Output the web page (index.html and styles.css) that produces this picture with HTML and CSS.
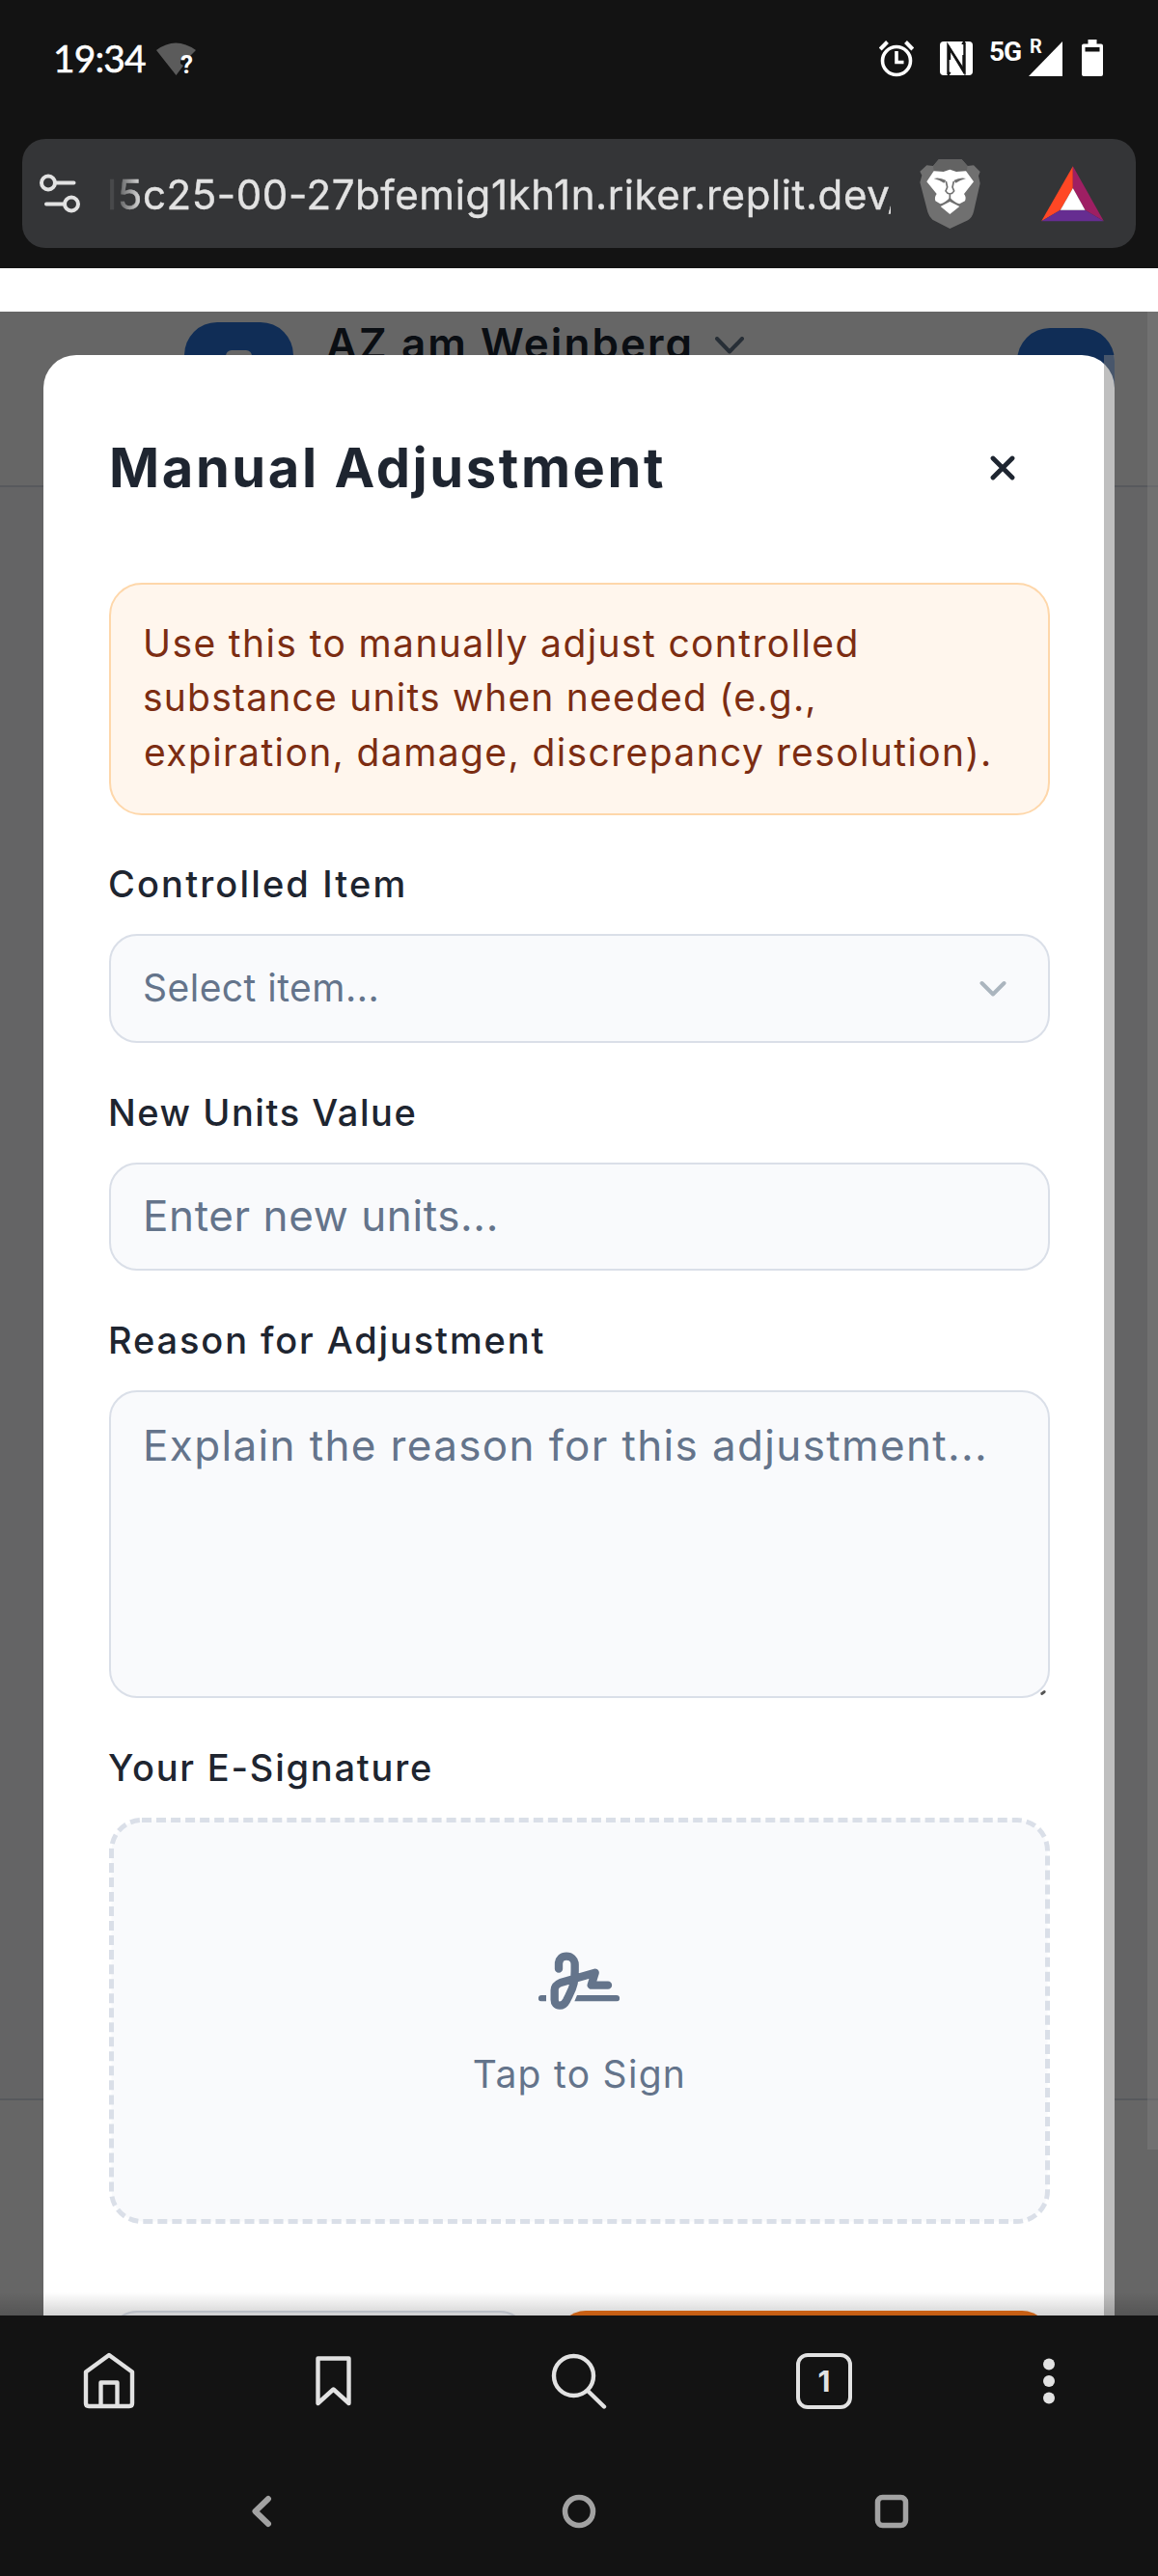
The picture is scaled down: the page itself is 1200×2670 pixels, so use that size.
FILE: index.html
```html
<!DOCTYPE html>
<html lang="en">
<head>
<meta charset="utf-8">
<title>Manual Adjustment</title>
<link rel="stylesheet" href="styles.css">
</head>
<body>
<div class="phone">
  <header class="status">
    <span class="clock">19:34</span>
    <span class="wifi">
      <svg width="42" height="34" viewBox="0 0 42 34"><path d="M0 8Q20-7 41 8L35 14Q24 12 25 22L28 24L20.500 34Z" fill="#5b5b5b"/></svg>
      <b class="wifi-mark">?</b>
    </span>
    <span class="spacer"></span>
    <svg class="alarm" width="36" height="38" viewBox="0 0 36 38" fill="none" stroke="#fff"><circle cx="18" cy="21" r="14.500" stroke-width="3.600"/><path d="M18 11v11.500h7.500" stroke-width="3.600"/><path d="M1.200 9L8.500 1.500M34.800 9L27.500 1.500" stroke-width="4"/></svg>
    <svg class="nfc" width="34" height="35" viewBox="0 0 34 35"><rect width="34" height="35" rx="4" fill="#fff"/><path d="M8.500 34V4.500L24.500 31V14" fill="none" stroke="#131313" stroke-width="2.400"/><path d="M25.500 1V31L10 7V19" fill="none" stroke="#131313" stroke-width="2.400"/><path d="M9 35q-.5-3 2-2M25 0q0 3-2 1.500" fill="none" stroke="#131313" stroke-width="2.400"/></svg>
    <b class="net">5G</b>
    <span class="signal">
      <svg width="35" height="36" viewBox="0 0 35 36"><path d="M35 0V36H0Z" fill="#fff"/></svg>
      <b class="roam">R</b>
    </span>
    <svg width="22" height="38" viewBox="0 0 22 38"><path d="M6.500 0h9v4.500H20a2 2 0 0 1 2 2V36a2 2 0 0 1-2 2H2a2 2 0 0 1-2-2V6.500a2 2 0 0 1 2-2h4.500Z" fill="#fff"/><path d="M3.500 8h15v4.500h-15z" fill="#131313"/></svg>
  </header>

  <div class="urlbar">
    <svg class="tune" width="43" height="41" viewBox="0 0 43 41" fill="none" stroke="#e2e2e2" stroke-width="4" stroke-linecap="round"><circle cx="9" cy="9.500" r="7"/><path d="M17 9.500H35.500M7 31.500H25"/><circle cx="33" cy="31.500" r="7"/></svg>
    <div class="url"><span>l5c25-00-27bfemig1kh1n.riker.replit.dev/</span></div>
    <svg class="shield" width="64" height="72" viewBox="38 28 192 216">
      <path d="M97 29h72l18 20 19-2 20 20-5 13 5 23-20 88q-4 18-18 27l-56 26-54-28q-10-8-15-24L39 100l6-22-6-12 21-19 20 2Z" fill="#707070"/>
      <path d="M97 29h72l18 20-3 16-36 1-16-7-16 7-34-1-2-16Z" fill="#636363"/>
      <path d="M82 65l30 2 20-7 20 7 30-2 24 33-30 38q8 10 3 22l-17 9q-15-4-30-20-14 16-30 20l-15-9q-4-12 4-22L60 98Z" fill="#fff"/>
      <path d="M132 160l30 15-30 24-29-24Z" fill="#fff"/>
      <path d="M82 88q18-5 38 6l-6 8q-14-9-32-14ZM182 88q-18-5-38 6l6 8q14-9 32-14Z" fill="#707070"/>
      <path d="M120 97l4 18-5 12q4 8 13 9 9-1 13-9l-5-12 4-18M132 136v15" fill="none" stroke="#707070" stroke-width="5"/>
    </svg>
    <svg class="bat" width="65" height="58" viewBox="417 48 194 174"><path d="M515 49V117L476 185 417 220Z" fill="#ff4724"/><path d="M515 49L611 220 553 185 515 117Z" fill="#9e1f63"/><path d="M417 220L476 185H553L611 220Z" fill="#662d91"/><path d="M515 117L553 185H476Z" fill="#fff"/></svg>
  </div>

  <main class="viewport">
    <div class="app">
      <div class="app-head">
        <span class="logo"><i></i></span>
        <span class="site">AZ am Weinberg</span>
        <svg class="site-chev" width="30" height="18" viewBox="0 0 30 18" fill="none" stroke="#617387" stroke-width="4" stroke-linecap="round" stroke-linejoin="round"><path d="M2 2L15 15.500 28 2"/></svg>
        <span class="avatar"></span>
      </div>
      <div class="app-body"></div>
      <div class="app-foot"></div>
    </div>

    <div class="backdrop"></div>
    <div class="page-scroll"></div>

    <section class="modal">
      <div class="modal-head">
        <h1>Manual Adjustment</h1>
        <svg class="close" width="26" height="26" viewBox="0 0 26 26" fill="none" stroke="#1e2530" stroke-width="4.800" stroke-linecap="round"><path d="M3 3L23 23M23 3L3 23"/></svg>
      </div>
      <p class="alert"><span class="l1">Use this to manually adjust controlled</span><br><span class="l2">substance units when needed (e.g.,</span><br><span class="l3">expiration, damage, discrepancy resolution).</span></p>
      <div class="field">
        <label class="lb-item">Controlled Item</label>
        <div class="control select"><span>Select item...</span>
          <svg width="28" height="18" viewBox="0 0 28 18" fill="none" stroke="#abb5be" stroke-width="4" stroke-linecap="round" stroke-linejoin="round"><path d="M2.500 3L14 14.500 25.500 3"/></svg>
        </div>
      </div>
      <div class="field">
        <label class="lb-units">New Units Value</label>
        <div class="control units"><span>Enter new units...</span></div>
      </div>
      <div class="field">
        <label class="lb-reason">Reason for Adjustment</label>
        <div class="control area"><span>Explain the reason for this adjustment...</span><i class="grip"></i></div>
      </div>
      <div class="field">
        <label class="lb-sign">Your E-Signature</label>
        <div class="sign">
          <svg class="sign-frame" width="975" height="421" viewBox="0 0 975 421"><rect x="2.500" y="2.500" width="970" height="416" rx="31.500" fill="#f9fafc" stroke="#dadfe8" stroke-width="5" stroke-dasharray="10 5.030"/></svg>
          <svg class="sign-icon" width="84" height="60" viewBox="324 130 252 180" fill="none" stroke="#64748b" stroke-linecap="round" stroke-linejoin="round"><path d="M387 183V167C387 153 397 144 411 144S437 154 437 169V190C437 220 434 238 419 266L411 282C405 293 398 297 390 297C380 297 374 290 374 279V249C374 236 381 231 393 226L500 195L488 234H540" stroke-width="25"/><path d="M348 265H333a9.500 9.500 0 0 0 0 19H348ZM444 265H567a9.500 9.500 0 0 1 0 19H436Z" fill="#64748b" stroke="none"/></svg>
          <span>Tap to Sign</span>
        </div>
      </div>
      <div class="actions"><div class="btn ghost"></div><div class="btn primary"></div></div>
      <div class="modal-scroll"></div>
    </section>
    <div class="shade"></div>
  </main>

  <nav class="tools">
    <svg width="54" height="60" viewBox="0 0 54 60" fill="none" stroke="#e2e2e2" stroke-width="4.400" stroke-linejoin="round"><path d="M3 20.500L27 3 51 20.500V53q0 3-3 3H6q-3 0-3-3ZM18.500 56V31.500H35.500V56"/></svg>
    <svg width="37" height="52" viewBox="0 0 37 52" fill="none" stroke="#e2e2e2" stroke-width="4.400" stroke-linejoin="round"><path d="M2.500 2.500H34.500V49L18.500 34.500 2.500 49Z"/></svg>
    <svg width="58" height="58" viewBox="0 0 58 58" fill="none" stroke="#e2e2e2" stroke-width="4.400" stroke-linecap="round"><circle cx="23.500" cy="23.500" r="20.500"/><path d="M38 39L55 55.500"/></svg>
    <span class="tab">1</span>
    <svg width="12" height="48" viewBox="0 0 12 48" fill="#e2e2e2"><circle cx="6" cy="6.500" r="6"/><circle cx="6" cy="24" r="6"/><circle cx="6" cy="41.500" r="6"/></svg>
  </nav>
  <nav class="system">
    <svg width="22" height="34" viewBox="0 0 22 34" fill="none" stroke="#a2a2a2" stroke-width="6" stroke-linecap="round" stroke-linejoin="round"><path d="M18 4L4.500 17 18 30"/></svg>
    <svg width="36" height="36" viewBox="0 0 36 36" fill="none" stroke="#a2a2a2" stroke-width="5.500"><circle cx="18" cy="18" r="14.500"/></svg>
    <svg width="36" height="36" viewBox="0 0 36 36" fill="none" stroke="#a2a2a2" stroke-width="5.500"><rect x="3.500" y="3.500" width="29" height="29" rx="5"/></svg>
  </nav>
</div>
</body>
</html>
```
FILE: styles.css
```css
* { box-sizing: border-box; }
body { margin: 0; font-family: Inter, "Liberation Sans", sans-serif; }
svg { display: block; flex: none; }
.phone { width: 1200px; height: 2670px; display: flex; flex-direction: column; background: #131313; overflow: hidden; }

/* status bar */
.status { height: 144px; flex: none; display: flex; align-items: flex-start; padding: 41px 57px 0 54px; color: #fff; }
.clock { font: 400 39px/40px Lato, sans-serif; letter-spacing: -.9px; width: 107px; margin: -1px 0 0 1px; -webkit-text-stroke: .5px #fff; }
.wifi { position: relative; margin-top: 3px; }
.wifi-mark { position: absolute; left: 25px; top: 9px; font: 700 26px/28px Roboto, sans-serif; }
.spacer { flex: 1; }
.alarm { margin: 1px 27px 0 0; }
.nfc { margin: 2px 17px 0 0; }
.net { font: 700 28px/28px Roboto, sans-serif; letter-spacing: -1px; width: 41px; margin-top: -1px; }
.signal { position: relative; margin: 2px 20px 0 0; }
.roam { position: absolute; left: 1px; top: -6px; font: 700 20px/22px Roboto, sans-serif; }

/* address bar */
.urlbar { height: 113px; flex: none; margin: 0 23px 21px; padding: 0 33px 0 18px; border-radius: 24px; background: #343537; display: flex; align-items: center; }
.url { width: 810px; margin-left: 29px; overflow: hidden; white-space: nowrap; color: #e2e2e2; font-size: 42px; line-height: 60px; letter-spacing: .6px; padding-top: 2px; -webkit-text-stroke: .4px #e2e2e2; -webkit-mask-image: linear-gradient(90deg, rgba(0,0,0,.12) 6px, #000 34px); mask-image: linear-gradient(90deg, rgba(0,0,0,.12) 6px, #000 34px); }
.url span { margin-left: -2px; }
.shield { margin-left: 30px; }
.bat { margin-left: auto; }

/* page behind the dialog */
.viewport { position: relative; height: 2122px; flex: none; padding-top: 45px; background: #fff; overflow: hidden; }
.app { height: 2077px; display: flex; flex-direction: column; }
.app-head { height: 182px; flex: none; display: flex; align-items: flex-start; padding: 0 45px 0 191px; border-bottom: 2px solid #dadfe8; background: #fff; }
.logo { width: 113px; height: 113px; margin-top: 11px; border-radius: 34px; background: #2871d7; padding: 29px 43px; }
.logo i { display: block; height: 40px; border-radius: 6px; background: #fff; }
.site { margin: 11px 0 0 34px; font-weight: 600; font-size: 44px; line-height: 44px; letter-spacing: 2.05px; color: #1a2430; white-space: nowrap; width: 404px; }
.site-chev { margin-top: 26px; margin-left: -1px; }
.avatar { width: 101px; height: 101px; margin: 17px 0 0 auto; border-radius: 34px; background: #2871d7; }
.app-body { flex: 1; background: #f9fafc; }
.app-foot { height: 225px; flex: none; border-top: 2px solid #dadfe8; background: #fff; }
.backdrop { position: absolute; inset: 45px 0 0; background: rgba(0,0,0,.6); }
.page-scroll { position: absolute; top: 45px; right: 0; width: 11px; height: 1905px; background: rgba(128,128,128,.43); }

/* dialog */
.modal { position: absolute; top: 90px; left: 45px; right: 45px; bottom: 0; padding: 72px 67px 0 68px; border-radius: 34px 34px 0 0; background: #fff; }
.modal-head { height: 90px; display: flex; align-items: center; justify-content: space-between; padding-right: 36px; margin-bottom: 74px; }
h1 { margin: 0; font-size: 56px; line-height: 90px; font-weight: 700; letter-spacing: 2.6px; color: #1e2530; white-space: nowrap; }
.alert { margin: 0 0 52px; height: 241px; padding: 33px 0 0 35px; border: 2px solid #fed7aa; border-radius: 34px; background: #fff6ed; color: #7c2d12; font-size: 39px; line-height: 56.250px; white-space: nowrap; }
.l1 { letter-spacing: 1.39px; margin-left: -2px; }
.l2 { letter-spacing: 1.22px; margin-left: -2px; }
.l3 { letter-spacing: 1.39px; margin-left: -1px; }
.field { margin-bottom: 53px; }
label { display: block; height: 40px; margin-bottom: 31px; font-size: 38px; line-height: 38px; font-weight: 500; color: #1e2530; white-space: nowrap; }
.lb-item { letter-spacing: 2.15px; margin-left: -1px; }
.lb-units { letter-spacing: 1.55px; margin-left: -1px; }
.lb-reason { letter-spacing: 1.88px; margin-left: -1px; }
.lb-sign { letter-spacing: 1.79px; margin-left: -1px; }
.control { position: relative; height: 112px; padding: 0 43px 0 33px; display: flex; align-items: center; justify-content: space-between; border: 2px solid #dadfe8; border-radius: 29px; background: #f9fafc; color: #64748b; white-space: nowrap; }
.select { font-size: 39px; letter-spacing: .48px; height: 113px; }
.select span { padding-bottom: 3px; }
.units { font-size: 44px; letter-spacing: .6px; padding-left: 33px; }
.units span { padding-bottom: 2px; }
.area { height: 319px; align-items: flex-start; font-size: 44px; line-height: 67px; letter-spacing: 1.36px; padding: 22px 0 0 33px; }
.grip { position: absolute; right: 2px; bottom: 2px; width: 6px; height: 3px; border-radius: 2px; background: #555; transform: rotate(-40deg); }
.sign { position: relative; height: 421px; display: flex; flex-direction: column; align-items: center; padding-top: 139px; color: #64748b; font-size: 39px; line-height: 50px; letter-spacing: 1.28px; }
.sign-frame { position: absolute; left: 0; top: 0; }
.sign-icon { position: relative; margin: 0 2px 42px 0; }
.sign span { position: relative; }
.actions { display: flex; gap: 31px; margin-top: 90px; }
.btn { height: 112px; border-radius: 29px; }
.ghost { width: 434px; border: 2px solid #dadfe8; background: #f9fafc; }
.primary { flex: 1; background: #ea7018; }
.modal-scroll { position: absolute; top: 0; right: 0; bottom: 0; width: 11px; background: rgba(128,128,128,.5); }
.shade { position: absolute; left: 0; right: 0; bottom: 0; height: 24px; background: linear-gradient(rgba(0,0,0,0), rgba(0,0,0,.17)); }

/* browser and system navigation */
.tools { height: 136px; flex: none; display: grid; grid-template-columns: 226px 239px 270px 238px 227px; align-items: center; justify-items: center; }
.tab { width: 58px; height: 58px; border: 4px solid #e2e2e2; border-radius: 12px; color: #e2e2e2; font-weight: 700; font-size: 30px; line-height: 50px; text-align: center; }
.system { height: 134px; flex: none; display: grid; grid-template-columns: 542px 115px 534px; align-items: center; justify-items: center; }
```
